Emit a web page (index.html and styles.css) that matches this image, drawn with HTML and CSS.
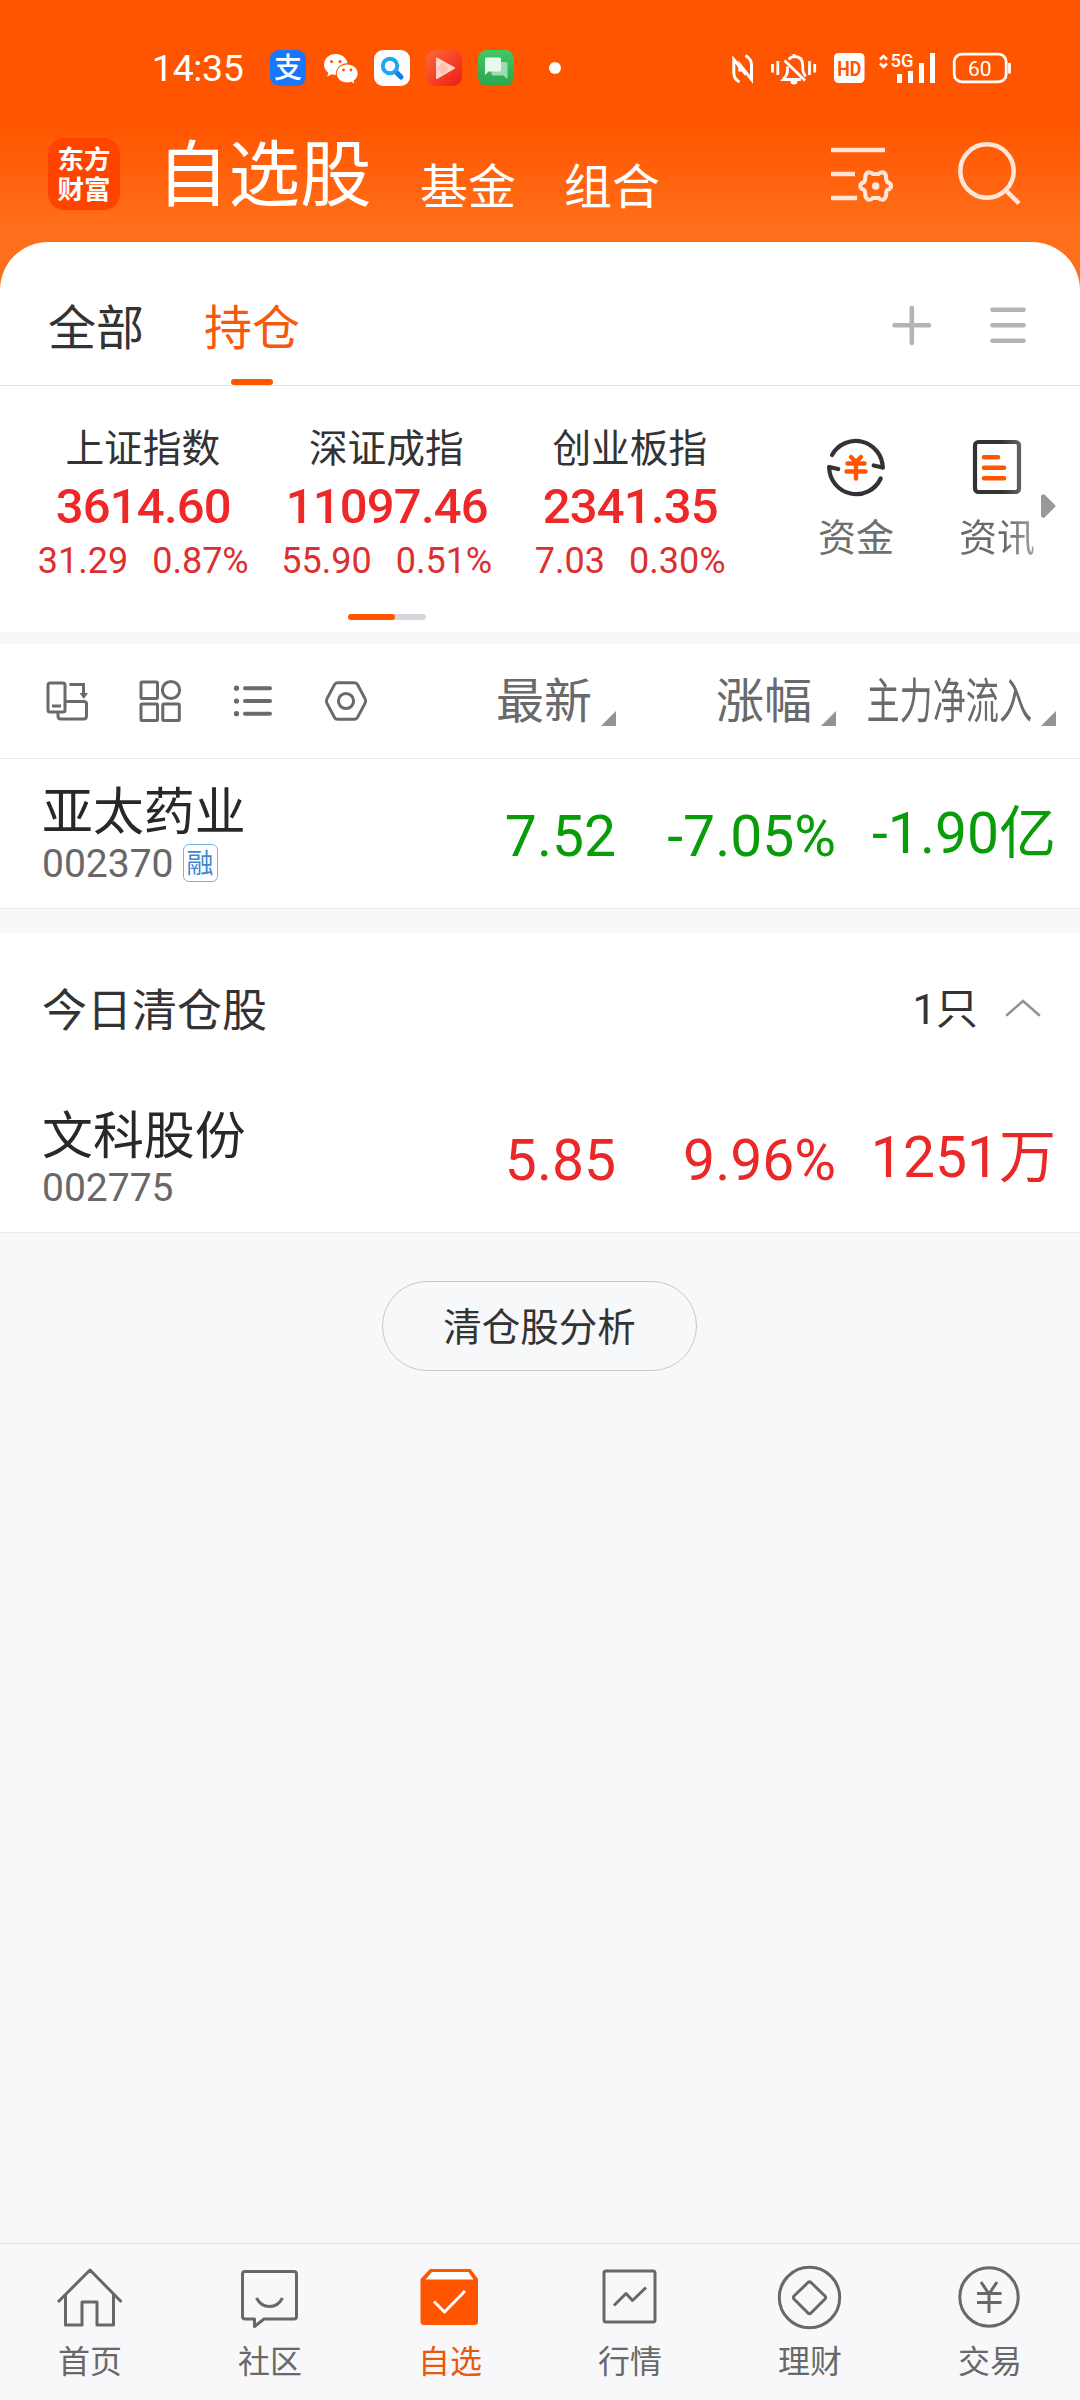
FILE: index.html
```html
<!DOCTYPE html>
<html lang="zh-CN">
<head>
<meta charset="utf-8">
<title>自选股</title>
<link rel="stylesheet" href="styles.css">
</head>
<body>
<div class="screen">
  <header class="top">
    <div class="status">
      <span class="clock">14:35</span>
      <span class="app app-pay">支</span>
      <svg class="wechat" width="34" height="29" viewBox="0 0 34 29">
        <path fill="#fff" d="M12 0C5 0 0 4.800 0 10.500c0 3.400 1.700 6.200 4.300 8.200L3.200 22.500l4.600-2.200c1.500.4 2.700.6 4.200.5-.9-6.300 4.500-11.700 11.500-11.600C22.500 3.800 17.700 0 12 0z"/>
        <path fill="#fff" d="M23.300 10.500c-5.900 0-10.500 3.900-10.500 8.900s4.600 9 10.500 9c1.400 0 2.600-.2 3.800-.6l3.400 1.700-.9-3c2.500-1.700 4.100-4.200 4.100-7.100 0-5-4.600-8.900-10.400-8.900z"/>
        <g fill="#ff5500"><circle cx="7.500" cy="7.500" r="1.600"/><circle cx="16" cy="7.500" r="1.600"/><circle cx="19.500" cy="16" r="1.400"/><circle cx="27" cy="16" r="1.400"/></g>
      </svg>
      <svg class="app-svg" width="36" height="36" viewBox="0 0 36 36">
        <rect width="36" height="36" rx="9" fill="#fbfcff"/>
        <path d="M21.500 21.500L27 27" stroke="#0d7fe6" stroke-width="5" stroke-linecap="round"/>
        <circle cx="16" cy="16" r="7.200" fill="#fff" stroke="#20a4f3" stroke-width="4"/>
      </svg>
      <svg class="app-svg" width="36" height="36" viewBox="0 0 36 36">
        <defs><linearGradient id="red" x1="0" y1="0" x2="1" y2="1"><stop offset="0" stop-color="#fb6a35"/><stop offset="1" stop-color="#f01a1a"/></linearGradient></defs>
        <rect width="36" height="36" rx="9" fill="url(#red)"/>
        <path d="M11 8.500l17 9.500-17 10z" fill="#ffd5cb" stroke="#ffd5cb" stroke-width="2" stroke-linejoin="round"/>
        <path d="M11 18l6-6 6 8-7 4z" fill="#ffbfb0"/>
      </svg>
      <svg class="app-svg" width="36" height="36" viewBox="0 0 36 36">
        <defs><linearGradient id="green" x1="0" y1="0" x2="0" y2="1"><stop offset="0" stop-color="#42c765"/><stop offset="1" stop-color="#2ba64d"/></linearGradient></defs>
        <rect width="36" height="36" rx="9" fill="url(#green)"/>
        <path d="M15 12h13a1.500 1.500 0 0 1 1.500 1.500V29l-4-3.500H15a1.500 1.500 0 0 1-1.500-1.500V13.500A1.500 1.500 0 0 1 15 12z" fill="#9ddcae"/>
        <path d="M8.500 7.500h13A1.500 1.500 0 0 1 23 9v11a1.500 1.500 0 0 1-1.500 1.500H10.500L7 25V9a1.500 1.500 0 0 1 1.500-1.500z" fill="#e9f8ed"/>
      </svg>
      <span class="more-dot"></span>
      <svg class="sys" width="280" height="44" viewBox="731 46 280 44">
        <g fill="none" stroke="#fff" stroke-width="3">
          <path d="M739.500 82q-5.700-3-5.700-9V59.500L746 74.500"/>
          <path d="M745.500 55.500q6 3.500 6 9.500v14.500L739.800 64.500v7"/>
        </g>
        <g fill="none" stroke="#fff" stroke-width="2.800">
          <path d="M772.500 64v8.500M777.800 61v14M809.500 61v14M814.700 64v8.500"/>
          <path d="M784.500 60.500L805 80.500M787.500 66.500v4.500q0 3.500-4.200 8.500h17.500M788.700 59.500q2.500-3 6-3 8 0 8 9v4q0 3 3 7M794 57.500V54"/>
        </g>
        <path d="M790.500 81h7a3.500 3.500 0 0 1-7 0z" fill="#fff"/>
        <rect x="834" y="53" width="30.500" height="30" rx="4.500" fill="#fff"/>
        <text x="849.200" y="76" class="hd" text-anchor="middle" textLength="24" lengthAdjust="spacingAndGlyphs">HD</text>
        <path d="M880 59.500l3.500-3.500 3.500 3.500M880 63.500l3.500 3.500 3.500-3.500" fill="none" stroke="#fff" stroke-width="2.600"/>
        <text x="890.500" y="67" class="fiveg" textLength="23" lengthAdjust="spacingAndGlyphs">5G</text>
        <path d="M899.500 74v9M910.500 71v12M921.500 63v20M932.500 53v30" stroke="#fff" stroke-width="5"/>
        <rect x="954.200" y="54.200" width="52" height="27.600" rx="7.500" fill="none" stroke="#fff" stroke-width="2.800"/>
        <path d="M1009.500 63v10.500" stroke="#fff" stroke-width="2.800"/>
        <text x="979.700" y="75.500" class="batt" text-anchor="middle">60</text>
      </svg>
    </div>
    <div class="titlebar">
      <div class="logo"><span>东方</span><span>财富</span></div>
      <h1 class="title">自选股</h1>
      <span class="subtitle fund">基金</span>
      <span class="subtitle group">组合</span>
      <svg class="filter" width="66" height="60" viewBox="829 146 66 60" fill="none" stroke="#ffe6d8" stroke-width="4.500">
        <path d="M831 150h54M831 174h24M831 198h26"/>
        <path stroke-width="4" stroke-linejoin="round" d="M868.500 172.200q3 0 4.200 1.800h6q1.200-1.800 4.200-1.800 3.800 1.600 3.200 6.800l1 3q4 1.200 4 4t-4 4l-1 3q.6 5.200-3.200 6.800-3 0-4.200-1.800h-6q-1.200 1.800-4.200 1.800-3.800-1.600-3.200-6.800l-1-3q-4-1.200-4-4t4-4l1-3q-.6-5.200 3.200-6.800z"/>
        <circle cx="875.700" cy="186" r="3.800" fill="#ffe6d8" stroke="none"/>
      </svg>
      <svg width="66" height="66" viewBox="956 141 66 66" fill="none" stroke="#ffe6d8" stroke-width="4.500">
        <circle cx="987" cy="171" r="26.700"/><path d="M1006 190.500l13 13"/>
      </svg>
    </div>
  </header>

  <main class="panel">
    <nav class="tabs">
      <span class="tab">全部</span>
      <span class="tab active">持仓</span>
      <svg class="tab-tools" width="136" height="42" viewBox="891 304 136 42" fill="none" stroke="#b3b3b3" stroke-width="4.600" stroke-linecap="round">
        <path d="M894.500 325.300h34.500M911.800 308v35M992.500 309.800h31M992.500 325.300h31M992.500 340.800h31"/>
      </svg>
    </nav>

    <section class="market">
      <div class="indices">
        <div class="index"><div class="iname">上证指数</div><div class="ivalue">3614.60</div><div class="ichange"><span>31.29</span><span>0.87%</span></div></div>
        <div class="index"><div class="iname">深证成指</div><div class="ivalue">11097.46</div><div class="ichange"><span>55.90</span><span>0.51%</span></div></div>
        <div class="index"><div class="iname">创业板指</div><div class="ivalue">2341.35</div><div class="ichange"><span>7.03</span><span>0.30%</span></div></div>
        <div class="pager"><i></i></div>
      </div>
      <div class="shortcut">
        <svg width="62" height="62" viewBox="825 436 62 62" fill="none" stroke="#333" stroke-width="4.200">
          <path stroke-linecap="round" d="M832 455a27 27 0 0 1 50.700 12.500"/>
          <path stroke-linecap="round" stroke-linejoin="round" d="M882.700 467.500l-9-2"/>
          <path stroke-linecap="round" d="M880.700 478.500a27 27 0 0 1-51.500-11"/>
          <path stroke-linecap="round" d="M829.200 467l9 2"/>
          <path stroke="#ff5500" stroke-width="4.400" stroke-linecap="round" d="M851 457l5 5 5-5M847.500 463.500h17M846.500 471.500h19M856 463v15.500"/>
        </svg>
        <span>资金</span>
      </div>
      <div class="shortcut news">
        <svg width="62" height="62" viewBox="966 436 62 62" fill="none">
          <defs><linearGradient id="edge" x1="0" x2="1"><stop offset=".6" stop-color="#333"/><stop offset="1" stop-color="#606060"/></linearGradient></defs>
          <rect x="975" y="442" width="44" height="50" rx="3.500" stroke="url(#edge)" stroke-width="4.200"/>
          <path stroke="#ff5500" stroke-width="4.600" stroke-linecap="round" d="M984 457.200h14M984 467.800h20M984 478.300h20"/>
        </svg>
        <span>资讯</span>
      </div>
      <svg class="next" width="16" height="26" viewBox="0 0 16 26"><path d="M1 3v20q1 2.500 3.500 1.500L15 14q1-1 0-2L4.500 1.500Q2 .5 1 3z" fill="#999"/></svg>
    </section>

    <section class="list">
      <div class="cols">
        <svg class="tools" width="324" height="44" viewBox="45 679 324 44" fill="none" stroke="#6a6a6a" stroke-width="3">
          <rect x="48" y="683" width="17" height="29" rx="2"/><path d="M52 706h9M69.500 684.500h14V694M58 713v3q0 3 3 3h22.500q3 0 3-3v-12.500q0-2-3-2H66"/>
          <path d="M79.500 693h8.500l-4.200 6z" fill="#6a6a6a" stroke="none"/>
          <rect x="141" y="682" width="16.500" height="16.500" rx="1"/><circle cx="171" cy="690" r="8.600"/><rect x="141" y="704" width="16.500" height="16.500" rx="1"/><rect x="162.800" y="704" width="16.500" height="16.500" rx="1"/>
          <path stroke-width="4" stroke-linecap="round" d="M245 688.200h25M245 701h25M245 713.700h25"/>
          <g fill="#6a6a6a" stroke="none"><circle cx="236.500" cy="688.200" r="2.600"/><circle cx="236.500" cy="701" r="2.600"/><circle cx="236.500" cy="713.700" r="2.600"/></g>
          <path stroke-linejoin="round" d="M337.500 682.800h17q2 0 3 1.800l7.500 14q1.300 2.400 0 4.800l-7.500 14q-1 1.800-3 1.800h-17q-2 0-3-1.800l-7.500-14q-1.300-2.400 0-4.800l7.500-14q1-1.800 3-1.800z"/><circle cx="346" cy="701" r="7.600"/>
        </svg>
        <span class="col c1">最新<i></i></span>
        <span class="col c2">涨幅<i></i></span>
        <span class="col c3"><b>主力净流入</b><i></i></span>
      </div>
      <div class="stock down">
        <div class="who"><div class="sname">亚太药业</div><div class="code">002370<em>融</em></div></div>
        <span class="num n1">7.52</span><span class="num n2">-7.05%</span><span class="num n3">-1.90亿</span>
      </div>
    </section>

    <section class="cleared">
      <div class="cleared-head">
        <span class="ctitle">今日清仓股</span><span class="count">1只</span>
        <svg width="36" height="18" viewBox="0 0 36 18" fill="none" stroke="#949494" stroke-width="2.600" stroke-linecap="round"><path d="M2 16L18 2l16 14"/></svg>
      </div>
      <div class="stock up">
        <div class="who"><div class="sname">文科股份</div><div class="code">002775</div></div>
        <span class="num n1">5.85</span><span class="num n2">9.96%</span><span class="num n3">1251万</span>
      </div>
    </section>
    <button class="analyse">清仓股分析</button>
  </main>

  <nav class="bottom">
    <div class="item">
      <svg width="70" height="66" viewBox="55 2264 70 66"><path d="M58 2302l32-32 31.500 32M65.500 2295v30H82v-23h15v23h16.500v-30"/></svg><span>首页</span>
    </div>
    <div class="item">
      <svg width="70" height="66" viewBox="235 2264 70 66"><path d="M245 2271.500h49q2.500 0 2.500 2.500v42.500q0 2.500-2.500 2.500h-30l-9.500 7.500v-7.500H245q-2.500 0-2.500-2.500V2274q0-2.500 2.500-2.500zM256.500 2298q4.500 8.500 13 8.500t13-8.500"/></svg><span>社区</span>
    </div>
    <div class="item on">
      <svg width="70" height="66" viewBox="415 2264 70 66">
        <path fill="#ff5500" stroke="none" d="M430 2269h40.500l7.500 10v42.500q0 3.500-3.500 3.500h-50.500q-3.500 0-3.500-3.500V2279z"/>
        <path fill="#fff" stroke="none" d="M432 2272h36.500l5 7.500h-48z"/>
        <path stroke="#fff" d="M434 2301.500l10.500 10.500 20.500-21"/>
      </svg><span>自选</span>
    </div>
    <div class="item">
      <svg width="70" height="66" viewBox="595 2264 70 66"><rect x="604" y="2271" width="51" height="51" rx="2"/><path d="M614 2305.500l12-12 6.500 7 13.500-13"/></svg><span>行情</span>
    </div>
    <div class="item">
      <svg width="70" height="66" viewBox="775 2264 70 66"><circle cx="809.500" cy="2297.500" r="30.200"/><path d="M808 2282.500q1.500-1.300 3 0l14 13.500q1.300 1.500 0 3l-14 14q-1.500 1.300-3 0l-14-14q-1.300-1.500 0-3z"/></svg><span>理财</span>
    </div>
    <div class="item">
      <svg width="70" height="66" viewBox="955 2264 70 66"><circle cx="989" cy="2297" r="29.200"/><path d="M981 2282l8 12 8-12M977 2293.500h24.500M977 2302.500h24.500M989 2293v20"/></svg><span>交易</span>
    </div>
  </nav>
</div>
</body>
</html>
```
FILE: styles.css
```css
* { box-sizing: border-box; }
body {
  margin: 0;
  font-family: Roboto, "Noto Sans CJK SC", sans-serif;
  font-weight: 400;
  color: #333;
}
i, em { font-style: normal; }
svg { display: block; flex: none; }
.screen {
  width: 1080px;
  height: 2400px;
  display: flex;
  flex-direction: column;
  background: #f7f8fa;
  overflow: hidden;
}

/* header */
.top {
  height: 302px;
  margin-bottom: -60px;
  background: linear-gradient(#ff5500 0, #ff5500 122px, #ff6e1a 225px, #ff6e1a 100%);
  color: #fff;
}
.status {
  height: 120px;
  padding: 50px 0 0 152px;
  display: flex;
  align-items: flex-start;
}
.clock { width: 118px; font-size: 37.500px; line-height: 37px; letter-spacing: -.4px; }
.app {
  width: 36px;
  height: 36px;
  margin-right: 18px;
  border-radius: 9px;
  font-size: 28px;
  line-height: 37px;
  text-align: center;
  font-weight: 500;
}
.app-pay { background: #1677ff; }
.wechat { margin: 4px 16px 0 0; }
.app-svg { margin-right: 16px; }
.more-dot {
  width: 12px;
  height: 12px;
  margin: 12px 170px 0 19px;
  border-radius: 50%;
  background: #fff;
}
.sys { margin-top: -4px; }
.hd { font: 700 21px Roboto, sans-serif; fill: #ff5500; }
.fiveg { font: 500 19px Roboto, sans-serif; fill: #fff; }
.batt { font: 400 21px Roboto, sans-serif; fill: #fff; }
.titlebar {
  height: 122px;
  padding-left: 48px;
  display: flex;
  align-items: flex-start;
}
.logo {
  width: 72px;
  height: 72px;
  margin: 18px 37px 0 0;
  padding-top: 7px;
  border-radius: 16px;
  background: #ff4400;
  display: flex;
  flex-direction: column;
  align-items: center;
  font-size: 26.500px;
  line-height: 30px;
  font-weight: 700;
}
.title {
  width: 263px;
  margin: 16px 0 0;
  font-size: 71.500px;
  line-height: 80px;
  font-weight: 400;
}
.subtitle { margin-top: 38px; font-size: 48px; line-height: 60px; }
.fund { width: 144px; }
.group { width: 265px; }
.filter { margin: 26px 61px 0 0; }
.titlebar > svg:last-child { margin-top: 21px; }

/* white sheet */
.panel {
  flex: 1;
  display: flex;
  flex-direction: column;
  align-items: stretch;
}
.tabs {
  height: 144px;
  padding-left: 48px;
  display: flex;
  background: #fff;
  border-bottom: 1px solid #e3e3e3;
  border-radius: 48px 48px 0 0;
}
.tab {
  width: 96px;
  height: 144px;
  margin-right: 60px;
  padding-top: 57px;
  font-size: 48px;
  line-height: 60px;
}
.tab.active { color: #f55a0c; display: flex; flex-direction: column; align-items: center; }
.tab.active::after {
  content: "";
  width: 42px;
  height: 6px;
  margin-top: 20px;
  border-radius: 3px;
  background: #ff5500;
}
.tab-tools { margin: 62px 0 0 531px; }
.market {
  height: 246px;
  display: flex;
  background: #fff;
}
.indices {
  width: 774px;
  padding: 36px 0 0 21px;
  display: grid;
  grid-template-columns: repeat(3, 243.5px);
  grid-template-rows: 192px 6px;
  text-align: center;
}
.iname { font-size: 38.700px; line-height: 54px; }
.ivalue {
  margin-top: 4px;
  padding-left: 1px;
  font-size: 49px;
  line-height: 54px;
  letter-spacing: -.8px;
  font-weight: 500;
  color: #ee2828;
}
.ichange {
  margin-top: 6px;
  padding-left: 1px;
  display: flex;
  justify-content: center;
  gap: 24px;
  font-size: 36px;
  line-height: 42px;
  color: #dc3030;
}
.pager {
  grid-column: 1 / 4;
  width: 78px;
  margin-left: 327px;
  border-radius: 3px;
  background: #d4d8dc;
}
.pager i {
  display: block;
  width: 47px;
  height: 6px;
  border-radius: 3px;
  background: #ff5500;
}
.shortcut {
  width: 140px;
  padding: 50px 0 0;
  margin-left: 12px;
  display: flex;
  flex-direction: column;
  align-items: center;
  font-size: 38px;
  line-height: 50px;
  color: #6e6e6e;
}
.shortcut span { margin-top: 15px; }
.news { width: 90px; margin: 0 -2px 0 26px; }
.news span {
  color: transparent;
  background: linear-gradient(90deg, #6a6a6a 60%, #a5a5a5);
  background-clip: text;
  -webkit-background-clip: text;
}
.next { margin: 107px 0 0; }

/* stock list */
.list { margin-top: 12px; background: #fff; }
.cols {
  height: 115px;
  padding: 35px 0 0 45px;
  display: flex;
  border-bottom: 1px solid #ebebeb;
  color: #6a6a6a;
  font-size: 48px;
  line-height: 46px;
}
.col {
  display: flex;
  justify-content: flex-end;
  align-items: flex-start;
  height: 48px;
}
.col i {
  width: 15px;
  height: 15px;
  margin: 32px 0 0 9px;
  background: #929298;
  clip-path: polygon(100% 0, 100% 100%, 0 100%);
}
.c1 { width: 247px; }
.c2 { width: 220px; }
.c3 { width: 220px; }
.c3 b {
  font-weight: 400;
  margin-left: -90px;
  transform: scaleX(.69);
  transform-origin: right;
}
.stock {
  height: 150px;
  padding-left: 42px;
  display: flex;
  border-bottom: 1px solid #ebebeb;
}
.who { width: 374px; padding-top: 23px; }
.sname { font-size: 50.900px; line-height: 62px; color: #282828; }
.code {
  display: flex;
  font-size: 39px;
  line-height: 40px;
  color: #686868;
}
.code em {
  width: 35px;
  height: 38px;
  margin: 0 0 0 9px;
  border: 1.500px solid #7fb0dd;
  border-radius: 6px;
  font-size: 27px;
  line-height: 39px;
  text-align: center;
  color: #3f86cf;
}
.num {
  padding-top: 43px;
  font-size: 57px;
  line-height: 70px;
  text-align: right;
  white-space: nowrap;
}
.n1 { width: 200px; }
.n2 { width: 220px; }
.n3 { width: 220px; padding-top: 40px; }
.down .num { color: #089c08; }
.up .num { color: #ea2828; }

.cleared { margin-top: 24px; background: #fff; }
.cleared-head {
  height: 150px;
  padding: 0 39px 0 42px;
  display: flex;
  align-items: center;
}
.ctitle { flex: 1; font-size: 45px; line-height: 60px; padding-top: 7px; }
.count { font-size: 42px; line-height: 60px; margin-right: 27px; padding-top: 4px; }
.analyse {
  width: 315px;
  height: 90px;
  margin: 48px 0 0 382px;
  padding: 4px 0 0;
  border: 1.500px solid #c6c8ca;
  border-radius: 45px;
  background: none;
  font: 400 38.500px/84px Roboto, "Noto Sans CJK SC", sans-serif;
  color: #333;
}

/* bottom navigation */
.bottom {
  height: 157px;
  display: flex;
  background: #f8f8fa;
  border-top: 1px solid #dfe0e2;
}
.item {
  flex: 1;
  padding-top: 20px;
  display: flex;
  flex-direction: column;
  align-items: center;
  font-size: 32px;
  line-height: 40px;
  color: #686868;
}
.item span { margin-top: 12px; }
.item svg { fill: none; stroke: #686868; stroke-width: 3; stroke-linejoin: round; }
.item.on { color: #e8590f; }
```
